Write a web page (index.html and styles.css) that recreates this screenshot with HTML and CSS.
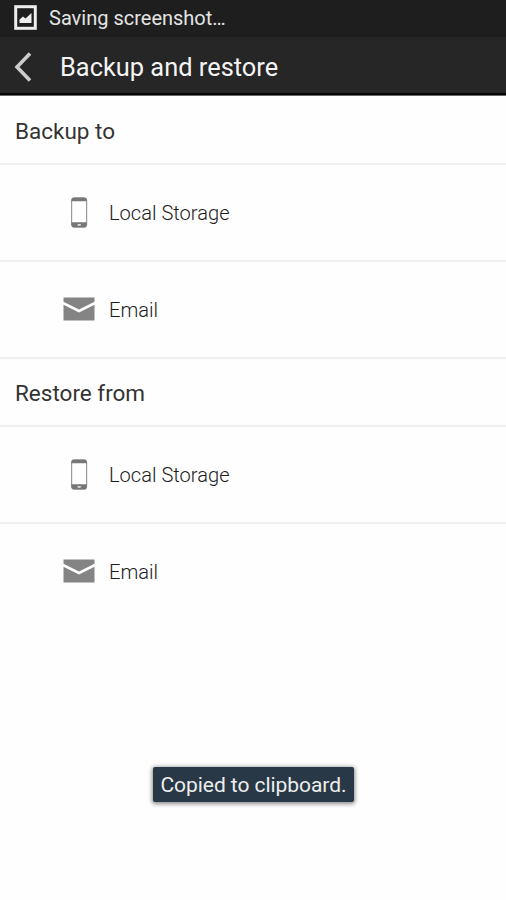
FILE: index.html
```
<!DOCTYPE html>
<html lang="en">
<head>
<meta charset="utf-8">
<title>Backup and restore</title>
<link rel="stylesheet" href="styles.css">
</head>
<body>
<svg class="defs" width="0" height="0" aria-hidden="true">
  <symbol id="phone" viewBox="0 0 18 31">
    <rect x="1.6" y="1" width="15" height="29" rx="2.5" fill="#fff" stroke="#999" stroke-width="1.2"/>
    <path d="M1.5 4.2V3Q1.5 .6 4 .6H14.2Q16.7 .6 16.7 3V4.2ZM1.5 25.3H16.7V28Q16.7 30.4 14.2 30.4H4Q1.5 30.4 1.5 28Z" fill="#777"/>
    <rect x="7.4" y="26.9" width="3.6" height="1.8" rx=".9" fill="#ddd"/>
  </symbol>
  <symbol id="mail" viewBox="0 0 32 24">
    <path d="M.5 .5H31.5V4.8L16 12.4 .5 4.8ZM.5 7.8L16 15.4 31.5 7.8V23.5H.5Z" fill="#848484"/>
  </symbol>
</svg>
<div class="status">
  <svg class="status-icon" width="23" height="25" viewBox="0 0 23 25">
    <rect x="1.7" y="1.7" width="19.6" height="21.6" fill="none" stroke="#eee" stroke-width="3"/>
    <path d="M5.5 18V14.6L9 11.5 11.5 13.6 17.5 8V18Z" fill="#eee"/>
  </svg>
  <span class="status-text">Saving screenshot…</span>
</div>
<header class="bar">
  <svg class="back" width="20" height="30" viewBox="0 0 20 30"><path d="M18 1.5L5 15 18 28.5" fill="none" stroke="#ccc" stroke-width="3.6"/></svg>
  <h1 class="title">Backup and restore</h1>
</header>
<main>
  <h2 class="section first">Backup to</h2>
  <div class="row"><span class="icon"><svg width="18" height="31"><use href="#phone"/></svg></span><span class="label">Local Storage</span></div>
  <div class="row"><span class="icon mail"><svg width="32" height="24"><use href="#mail"/></svg></span><span class="label">Email</span></div>
  <h2 class="section">Restore from</h2>
  <div class="row"><span class="icon"><svg width="18" height="31"><use href="#phone"/></svg></span><span class="label">Local Storage</span></div>
  <div class="row last"><span class="icon mail"><svg width="32" height="24"><use href="#mail"/></svg></span><span class="label">Email</span></div>
</main>
<div class="toast">Copied to clipboard.</div>
</body>
</html>
```
FILE: styles.css
```
* { box-sizing: border-box; }
body { margin: 0; height: 900px; overflow: hidden; background: #fefefe; color: #1c1c1c; font-family: Roboto, "Liberation Sans", sans-serif; }
.defs { position: absolute; }
.status { height: 37px; display: flex; align-items: center; padding: 0 0 2px 14px; background: #1e1e1e; }
.status-icon { margin-right: 12px; }
.status-text { font-size: 20px; line-height: 24px; color: #e4e4e4; }
.bar { height: 59px; display: flex; align-items: center; padding: 1px 0 0 12px; background: #262626; border-bottom: 1px solid #666; box-shadow: inset 0 -2px #050505; }
.back { margin-right: 28px; }
.title { margin: 0; padding-top: 1px; font-size: 25.4px; font-weight: 400; line-height: 30px; color: #f4f4f4; }
.section { margin: 0; height: 68px; padding: 2px 0 0 15px; display: flex; align-items: center; font-size: 22.5px; font-weight: 400; color: #333; border-bottom: 2px solid #f0f0f0; }
.first { height: 69px; }
.row { height: 97px; display: flex; align-items: center; padding-left: 63px; border-bottom: 2px solid #f0f0f0; }
.icon { width: 32px; margin-right: 14px; display: flex; justify-content: center; }
.mail { margin-bottom: 1px; }
.label { padding-top: 1px; font-size: 20.1px; font-weight: 300; }
.last { border-bottom-color: transparent; }
.toast { position: absolute; left: 153px; top: 767px; width: 201px; height: 35px; line-height: 37px; text-align: center; white-space: nowrap; font-size: 21px; letter-spacing: -.05px; color: #eee; background: #283846; border-radius: 2px; box-shadow: 0 1px 4px 1px rgba(0,0,0,.45); }
```
